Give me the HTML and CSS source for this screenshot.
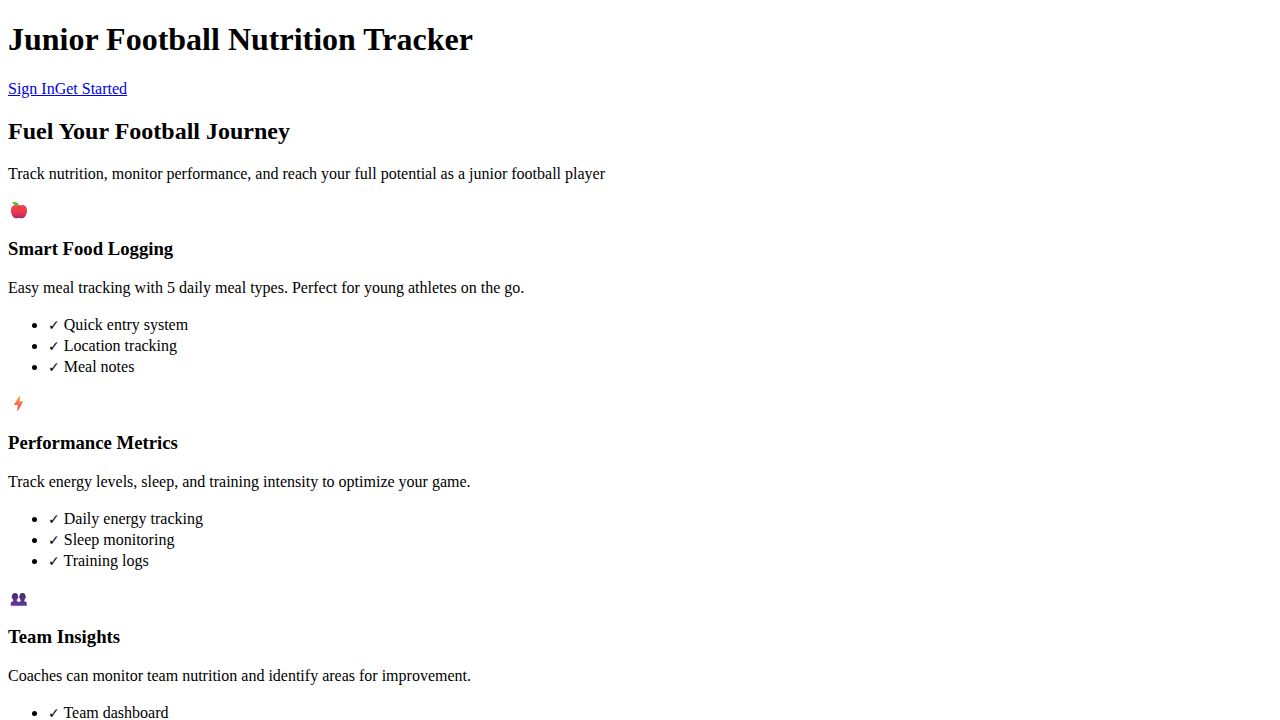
FILE: index.html
```
<!DOCTYPE html>
<html lang="en">
<head>
<meta charset="utf-8">
<title>Junior Football Nutrition Tracker</title>
<link rel="stylesheet" href="styles.css">
</head>
<body>
<header>
<h1 class="title">Junior Football Nutrition Tracker</h1>
<nav class="nav"><a class="link" href="#signin">Sign In</a><a class="link" href="#start">Get Started</a></nav>
</header>
<main>
<h2 class="headline">Fuel Your Football Journey</h2>
<p class="text">Track nutrition, monitor performance, and reach your full potential as a junior football player</p>
<section class="feature">
<div class="icon"><svg width="22" height="22" viewBox="0 0 22 22" aria-hidden="true"><defs><linearGradient id="apple" x1="0" y1="0" x2="0" y2="1"><stop offset="0" stop-color="#f8444f"/><stop offset=".6" stop-color="#e8364f"/><stop offset="1" stop-color="#a52a78"/></linearGradient></defs><path d="M11 6.600C7.500 5.200 3 5.800 3 11.400c0 4 2.200 7.800 5.400 7.800 1 0 1.600-.3 2.600-.3s1.600.3 2.600.3c3.200 0 5.400-3.800 5.400-7.800 0-5.600-4.500-6.200-8-4.800z" fill="url(#apple)"/><path d="M11.300 8.500C11.200 7 10.700 6 9.500 5" fill="none" stroke="#8a4a35"/><path d="M4 3.200c3.500-.8 6.600.3 7 3.300-3.300.5-5-.4-7-3.300z" fill="#6db52d"/></svg></div>
<h3 class="name">Smart Food Logging</h3>
<p class="text">Easy meal tracking with 5 daily meal types. Perfect for young athletes on the go.</p>
<ul class="list"><li><span class="check">✓</span> Quick entry system</li><li><span class="check">✓</span> Location tracking</li><li><span class="check">✓</span> Meal notes</li></ul>
</section>
<section class="feature">
<div class="icon"><svg width="22" height="22" viewBox="0 0 22 22" aria-hidden="true"><defs><linearGradient id="bolt" x1="0" y1="0" x2="0" y2="1"><stop offset="0" stop-color="#fca83a"/><stop offset="1" stop-color="#f0405a"/></linearGradient></defs><path d="M11.500 3 12.200 3.200 11.700 8.500H14.800L15 9 9.800 18 9.200 17.800 9.800 12H6.300L6 11.500z" fill="url(#bolt)"/></svg></div>
<h3 class="name">Performance Metrics</h3>
<p class="text">Track energy levels, sleep, and training intensity to optimize your game.</p>
<ul class="list"><li><span class="check">✓</span> Daily energy tracking</li><li><span class="check">✓</span> Sleep monitoring</li><li><span class="check">✓</span> Training logs</li></ul>
</section>
<section class="feature">
<div class="icon"><svg width="22" height="22" viewBox="0 0 22 22" aria-hidden="true"><defs><linearGradient id="team" x1="0" y1="0" x2="0" y2="1"><stop offset="0" stop-color="#43306a"/><stop offset="1" stop-color="#6736a0"/></linearGradient></defs><path id="person" d="M7 6c2.200 0 3 1.300 3 3.200.6.200.5 1.500-.1 1.800-.2 1-.6 1.500-1.100 2v1.200c1.700.2 2.500.8 2.500 2.300v2.200H2.800v-2.200c0-1.500.8-2.100 2.400-2.300V13c-.5-.5-.9-1-1.100-2-.6-.3-.7-1.600-.1-1.800C4 7.300 4.800 6 7 6z" fill="url(#team)"/><use href="#person" x="7.500"/></svg></div>
<h3 class="name">Team Insights</h3>
<p class="text">Coaches can monitor team nutrition and identify areas for improvement.</p>
<ul class="list"><li><span class="check">✓</span> Team dashboard</li></ul>
</section>
</main>
</body>
</html>
```
FILE: styles.css
```
body {
  margin: 0;
  padding: 0 8px;
  font-family: "Liberation Serif", "DejaVu Sans", serif;
  font-size: 16px;
  color: #000;
  background: #fff;
}
.title { font-size: 32px; margin: 21px 0 22px; }
.headline { font-size: 24px; margin: 20px 0; }
.name { font-size: 1.17em; margin: 17px 0 19px; }
.text { margin: 16px 0; }
.link { color: #00e; }
.icon { height: 22px; }
.icon svg { display: block; }
.list { margin: 17px 0 16px; padding-left: 40px; line-height: 21px; }
.check { font-size: 14px; line-height: 1; }
```
